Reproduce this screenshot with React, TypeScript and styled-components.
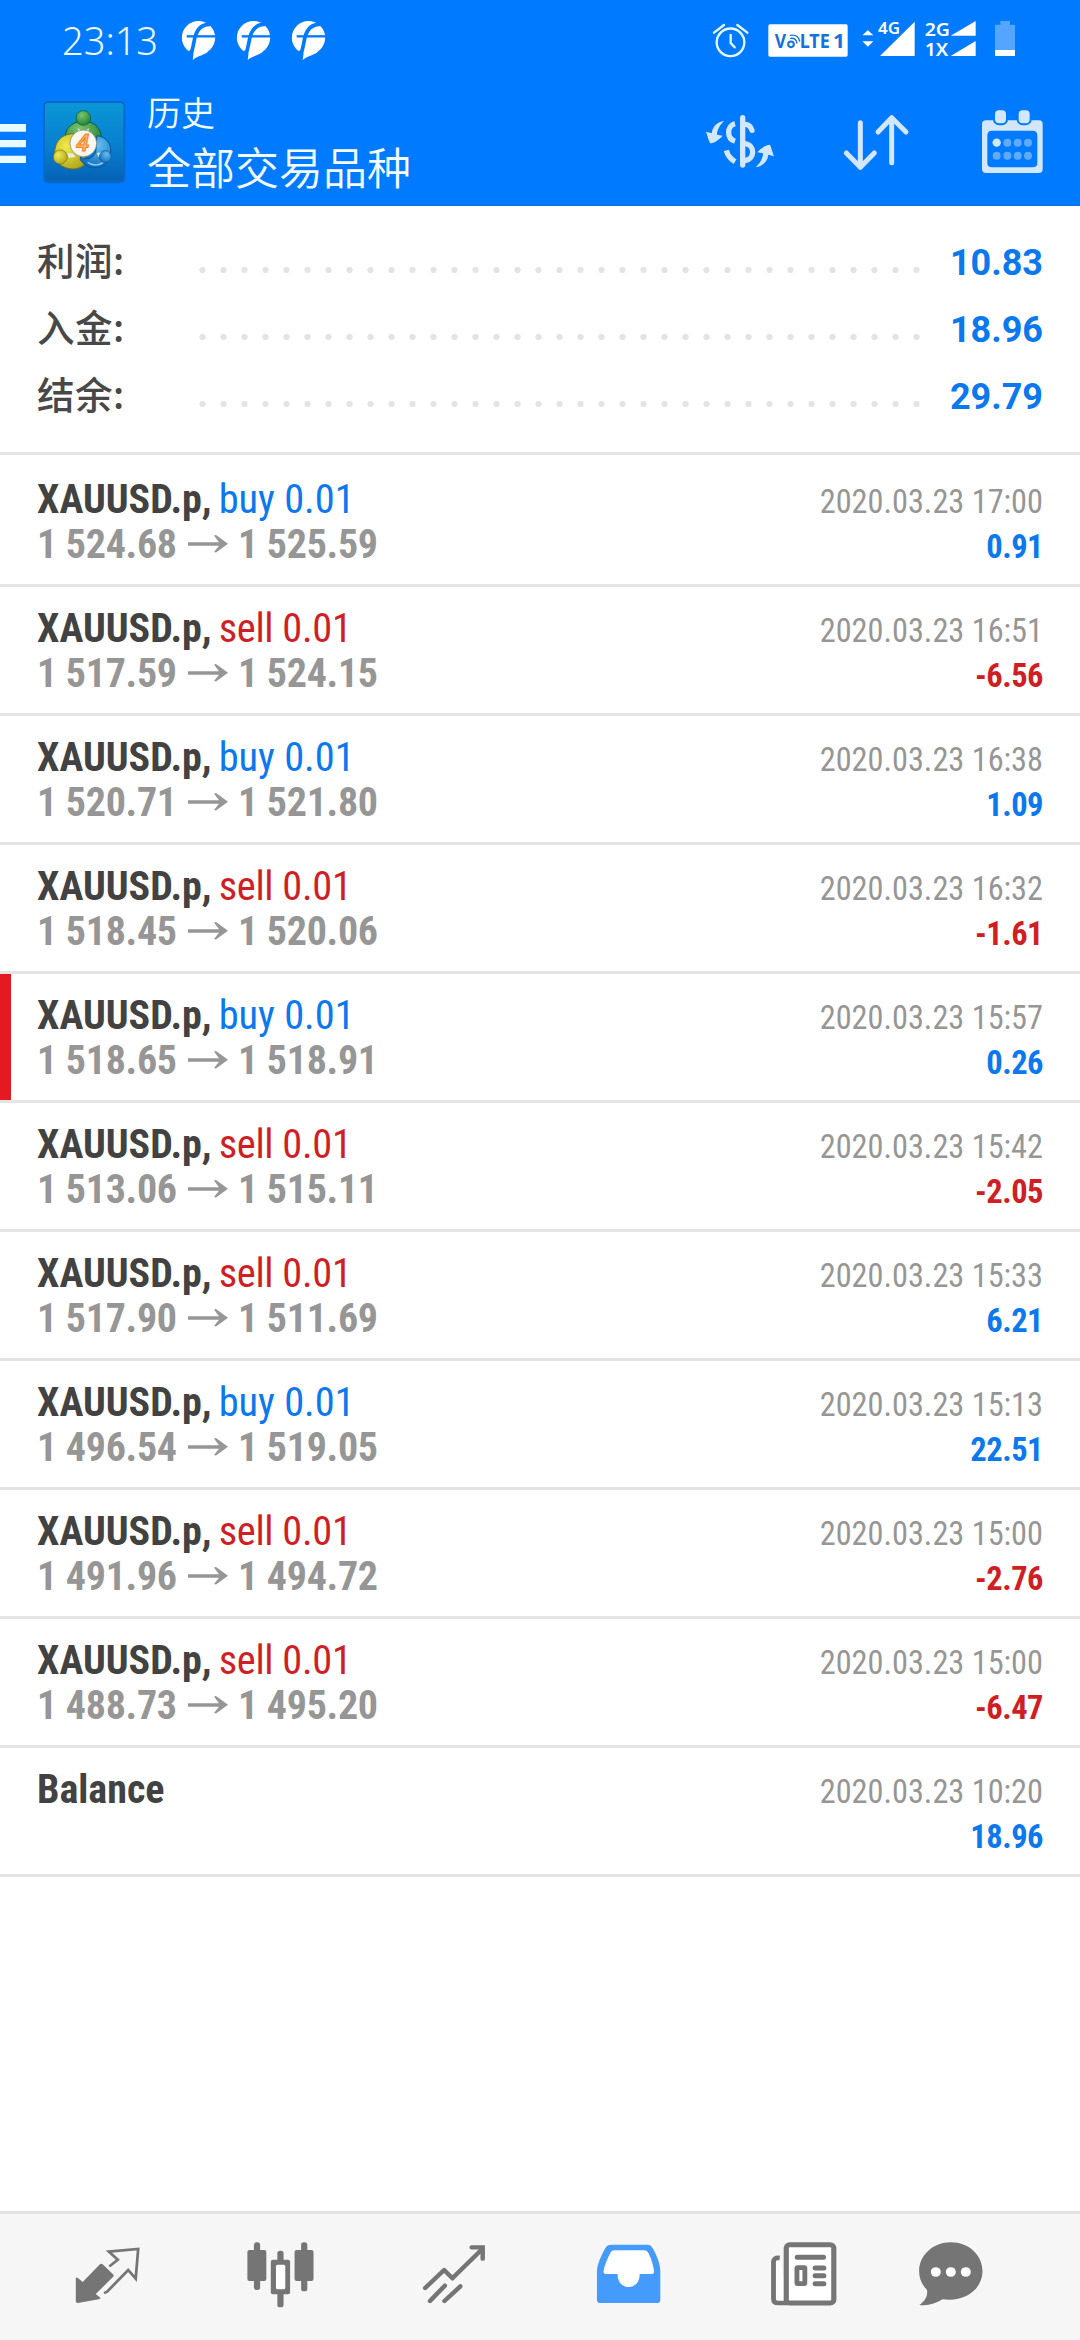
import React from "react";
import styled, { createGlobalStyle } from "styled-components";

const BLUE = "#007aff";
const ICON = "#d2e6fc";
const GREY = "#757575";
const CONDENSED = `"Roboto Condensed", Roboto, "Liberation Sans", sans-serif`;
const CJK = `"Noto Sans CJK SC", sans-serif`;

const GlobalStyle = createGlobalStyle`
  * { box-sizing: border-box; }
  body { margin: 0; background: #fff; }
`;

const Screen = styled.div`
  display: flex;
  flex-direction: column;
  width: 1080px;
  height: 2340px;
  overflow: hidden;
  background: #fff;
  font-family: ${CONDENSED};
`;

const StatusBar = styled.div`
  display: flex;
  align-items: center;
  height: 80px;
  padding: 0 64px 0 62px;
  background: ${BLUE};
`;

const Clock = styled.span`
  width: 119px;
  font: 300 38px/50px "Noto Sans", sans-serif;
  color: #eefaff;
  white-space: nowrap;
`;

const Notifications = styled.div`
  display: flex;
  gap: 20px;
  flex: 1;
`;

const Glyph = styled.svg<{ $w: number; $h: number; $gap?: number }>`
  display: block;
  flex: none;
  overflow: visible;
  width: ${(p) => p.$w}px;
  height: ${(p) => p.$h}px;
  margin-left: ${(p) => p.$gap ?? 0}px;
`;

const SignalText = styled.text`
  font-family: "Noto Sans", sans-serif;
  font-weight: 600;
`;

const Header = styled.header`
  display: flex;
  align-items: center;
  height: 126px;
  padding-right: 32px;
  background: ${BLUE};
  border-bottom: 1px solid #0a70e2;
`;

const Titles = styled.div`
  flex: 1;
  margin: -7px 0 0 21px;
  font-family: ${CJK};
  font-weight: 350;
  color: #f2fcff;
`;

const Caption = styled.div`
  font-size: 34px;
  line-height: 55px;
`;

const Title = styled.div`
  font-size: 44px;
  line-height: 55px;
`;

const Actions = styled.div`
  display: flex;
  gap: 64px;
`;

const Summary = styled.section`
  height: 249px;
  padding: 19px 37px 0 37px;
  border-bottom: 3px solid #e4e4e4;
`;

const SummaryLine = styled.div`
  display: flex;
  align-items: baseline;
  height: 67px;
`;

const Label = styled.span`
  width: 155px;
  font: 500 37.5px/67px ${CJK};
  letter-spacing: 0.5px;
  color: #484848;
`;

const Leader = styled.span`
  align-self: flex-start;
  width: 735px;
  height: 6px;
  margin-top: 42px;
  background: radial-gradient(circle, #e4e4e4 2.8px, transparent 3.5px) 0 0 / 21px 6px;
`;

const Amount = styled.span`
  flex: 1;
  text-align: right;
  font: 700 36px/67px Roboto, sans-serif;
  color: #0b78ee;
`;

const Deals = styled.main`
  flex: 1;
  padding-top: 3px;
`;

const Deal = styled.article<{ $marked?: boolean }>`
  height: 129px;
  padding: 19px 37px 0 37px;
  border-bottom: 3px solid #e4e4e4;
  background: ${(p) => (p.$marked ? "linear-gradient(90deg, #e31b20 10.5px, #fff 10.5px)" : "#fff")};
`;

const DealLine = styled.div`
  display: flex;
  align-items: baseline;
  height: 45px;
  line-height: 45px;
  white-space: pre;

  &::before {
    content: "";
    height: 36px;
  }
`;

const SymbolName = styled.span`
  font-size: 40px;
  font-weight: 700;
  color: #424242;
`;

const Side = styled.span<{ $side: "buy" | "sell" }>`
  margin-left: 7px;
  font-size: 40.4px;
  letter-spacing: ${(p) => (p.$side === "buy" ? "0" : "-0.3px")};
  color: ${(p) => (p.$side === "buy" ? "#0b78ee" : "#cf1f25")};
`;

const Price = styled.span`
  width: 140px;
  font-size: 40px;
  font-weight: 700;
  letter-spacing: -0.3px;
  color: #969696;
`;

const Arrow = styled.svg`
  align-self: flex-start;
  width: 40px;
  height: 18px;
  margin: 13px 10px 0 11px;
`;

const Time = styled.span`
  margin-left: auto;
  font-size: 32.3px;
  color: #969696;
`;

const Profit = styled.span<{ $loss: boolean }>`
  margin-left: auto;
  font-size: 32.5px;
  font-weight: 700;
  letter-spacing: -0.5px;
  color: ${(p) => (p.$loss ? "#cf1f25" : "#0b78ee")};
`;

const NavBar = styled.nav`
  display: flex;
  height: 129px;
  padding-left: 21px;
  background: #f6f6f6;
  border-top: 3px solid #e2e2e2;
`;

const NavItem = styled.div<{ $w: number }>`
  display: flex;
  align-items: center;
  justify-content: center;
  width: ${(p) => p.$w}px;
`;

const NavGlyph = styled.svg.attrs({ preserveAspectRatio: "none" })`
  width: 72px;
  height: 72px;
`;

const FIcon = () => (
  <Glyph $w={35} $h={41} viewBox="543 57 105 123">
    <circle cx="595.5" cy="110" r="50" fill="#fff" />
    <path d="M586 120 L578 177 C590 166 608 164 622 154 L624 118Z" fill="#fff" />
    <path d="M640 70 C606 66 591 86 585 108 C580 134 577 150 570 170" fill="none" stroke={BLUE} strokeWidth="11" />
    <path d="M560 106 H648" stroke={BLUE} strokeWidth="7" />
    <path d="M566 151 L581 140 L576 178 L560 178Z" fill={BLUE} />
    <path d="M592 130 L586 158 L578 177 L600 150Z" fill="#fff" />
  </Glyph>
);

const AppIcon = () => (
  <Glyph $w={83} $h={83} $gap={17} viewBox="0 0 249 249">
    <defs>
      <linearGradient id="tile" x1="0" y1="0" x2="0" y2="1">
        <stop offset="0" stopColor="#0a97d6" />
        <stop offset="0.55" stopColor="#087fd0" />
        <stop offset="1" stopColor="#0561b4" />
      </linearGradient>
      <radialGradient id="green" cx="0.4" cy="0.3" r="0.8">
        <stop offset="0" stopColor="#7cc56a" />
        <stop offset="1" stopColor="#167a35" />
      </radialGradient>
      <radialGradient id="yellow" cx="0.35" cy="0.35" r="0.8">
        <stop offset="0" stopColor="#f1ea4c" />
        <stop offset="1" stopColor="#a99f16" />
      </radialGradient>
      <radialGradient id="sky" cx="0.6" cy="0.3" r="0.8">
        <stop offset="0" stopColor="#63bdf3" />
        <stop offset="1" stopColor="#0965b5" />
      </radialGradient>
    </defs>
    <rect x="3" y="3" width="241" height="241" rx="12" fill="url(#tile)" stroke="#086bc9" strokeWidth="6" />
    <path d="M67 120 C62 84 85 62 121 60 C160 62 180 88 174 124 L156 142 L146 108 L96 102Z" fill="url(#green)" stroke="#0c5c38" strokeWidth="3" />
    <path d="M38 168 C28 130 52 98 92 98 L86 132 L132 176 C124 208 76 212 50 190Z" fill="url(#yellow)" stroke="#6f741c" strokeWidth="3" />
    <path d="M112 168 C130 180 150 172 158 154 L162 104 C192 108 208 132 202 160 C200 200 140 218 112 176Z" fill="url(#sky)" stroke="#07559c" strokeWidth="3" />
    <path d="M134 184 C148 196 172 194 184 180" fill="none" stroke="#8fd0f6" strokeWidth="4" />
    <path d="M104 82 L121 92 L139 82 L134 96 L108 96Z M72 156 L90 158 L98 168 L78 170Z M162 156 L178 154 L166 168Z" fill="#dff0e8" />
    <circle cx="121" cy="51" r="22" fill="url(#green)" stroke="#0c5c38" strokeWidth="2" />
    <circle cx="52" cy="168" r="21" fill="url(#yellow)" stroke="#6f741c" strokeWidth="2" />
    <circle cx="187" cy="167" r="18" fill="url(#sky)" stroke="#07559c" strokeWidth="2" />
    <circle cx="121" cy="127" r="40" fill="#fbf6ee" stroke="#6e7f78" strokeWidth="2" />
    <text x="119" y="151" textAnchor="middle" fontFamily="Noto Sans, sans-serif" fontStyle="italic" fontSize="68" fontWeight="600" fill="#ffb768" stroke="#f08024" strokeWidth="3">4</text>
  </Glyph>
);

const CurvedArrow = () => (
  <path d="M133 362 C111 366 97 380 95 400 L78 395 C82 405 85 419 90 430 C103 429 118 419 128 407 L111 404 C111 389 120 374 133 362Z" />
);

const summary = [
  ["利润:", "10.83"],
  ["入金:", "18.96"],
  ["结余:", "29.79"],
];

type DealData = { side?: "buy" | "sell"; from?: string; to?: string; time: string; profit: string; marked?: boolean };

const deals: DealData[] = [
  { side: "buy", from: "1 524.68", to: "1 525.59", time: "17:00", profit: "0.91" },
  { side: "sell", from: "1 517.59", to: "1 524.15", time: "16:51", profit: "-6.56" },
  { side: "buy", from: "1 520.71", to: "1 521.80", time: "16:38", profit: "1.09" },
  { side: "sell", from: "1 518.45", to: "1 520.06", time: "16:32", profit: "-1.61" },
  { side: "buy", from: "1 518.65", to: "1 518.91", time: "15:57", profit: "0.26", marked: true },
  { side: "sell", from: "1 513.06", to: "1 515.11", time: "15:42", profit: "-2.05" },
  { side: "sell", from: "1 517.90", to: "1 511.69", time: "15:33", profit: "6.21" },
  { side: "buy", from: "1 496.54", to: "1 519.05", time: "15:13", profit: "22.51" },
  { side: "sell", from: "1 491.96", to: "1 494.72", time: "15:00", profit: "-2.76" },
  { side: "sell", from: "1 488.73", to: "1 495.20", time: "15:00", profit: "-6.47" },
  { time: "10:20", profit: "18.96" },
];

const DealRow = ({ deal }: { deal: DealData }) => (
  <Deal $marked={deal.marked}>
    <DealLine>
      <SymbolName>{deal.side ? "XAUUSD.p," : "Balance"}</SymbolName>
      {deal.side && <Side $side={deal.side}>{deal.side} 0.01</Side>}
      <Time>2020.03.23 {deal.time}</Time>
    </DealLine>
    <DealLine>
      {deal.from && (
        <>
          <Price>{deal.from}</Price>
          <Arrow viewBox="0 0 40 18">
            <path d="M0 7.2 H31 L26 0.5 L28 0 L40 8.8 L28 17.5 L26 17 L31 10.8 H0Z" fill="#969696" />
          </Arrow>
          <Price>{deal.to}</Price>
        </>
      )}
      <Profit $loss={deal.profit.startsWith("-")}>{deal.profit}</Profit>
    </DealLine>
  </Deal>
);

export default function App() {
  return (
    <Screen>
      <GlobalStyle />
      <StatusBar>
        <Clock>23:13</Clock>
        <Notifications>
          <FIcon />
          <FIcon />
          <FIcon />
        </Notifications>
        <Glyph $w={38} $h={38} viewBox="96 66 114 114" fill="none" stroke="#e6fbff" strokeWidth="7" strokeLinecap="round">
          <circle cx="151.500" cy="130" r="41.500" />
          <path d="M152 108 V132 L164 145 M102 101 L132 78 M202 101 L172 78" />
        </Glyph>
        <Glyph $w={80} $h={38} $gap={18} viewBox="264 66 240 114">
          <rect x="265" y="76" width="238" height="97" rx="5" fill="#fff" />
          <g fill="#1273dc" fontFamily="Noto Sans, sans-serif" fontWeight="700">
            <text x="284" y="147" fontSize="58" textLength="34" lengthAdjust="spacingAndGlyphs">V</text>
            <text x="359" y="147" fontSize="58" textLength="90" lengthAdjust="spacingAndGlyphs">LTE</text>
            <text x="459" y="147" fontSize="58" textLength="36" lengthAdjust="spacingAndGlyphs">1</text>
          </g>
          <g fill="none" stroke="#1273dc" strokeLinecap="round">
            <circle cx="333" cy="136" r="8.500" strokeWidth="6" />
            <path d="M332 118 C342 117 349 123 351 132 M331 109 C346 107 356 115 359 126" strokeWidth="4" />
          </g>
        </Glyph>
        <Glyph $w={55} $h={38} $gap={12} viewBox="540 66 165 114" fill="#fff">
          <path d="M547 109 L563.500 94 L580 109Z M547 127 L580 127 L563.500 143Z" />
          <path d="M600 171 H704 V68Z" />
          <SignalText x="594" y="105" fontSize="49" stroke={BLUE} strokeWidth="6" paintOrder="stroke" textLength="66" lengthAdjust="spacingAndGlyphs">4G</SignalText>
        </Glyph>
        <Glyph $w={53} $h={38} $gap={9} viewBox="732 66 159 114" fill="#fff">
          <SignalText x="734" y="110" fontSize="51" textLength="76" lengthAdjust="spacingAndGlyphs">2G</SignalText>
          <SignalText x="734" y="171" fontSize="51" textLength="71" lengthAdjust="spacingAndGlyphs">1X</SignalText>
          <path d="M812 110 H887 V66Z M812 171 H887 V126Z" />
        </Glyph>
        <Glyph $w={22} $h={38} $gap={17} viewBox="942 66 66 114" fill="#fff">
          <path d="M961 66 H990 V77 H1005 V153 H945 V77 H961Z" opacity="0.33" />
          <path d="M945 153 H1005 V171 H945Z" />
        </Glyph>
      </StatusBar>

      <Header>
        <Glyph $w={26} $h={43} viewBox="0 366 78 129" fill="#e8faff">
          <path d="M0 375 H78 V398 H0Z M0 423 H78 V445 H0Z M0 470 H78 V492 H0Z" />
        </Glyph>
        <AppIcon />
        <Titles>
          <Caption>历史</Caption>
          <Title>全部交易品种</Title>
        </Titles>
        <Actions>
          <Glyph $w={72} $h={72} viewBox="72 321 216 216" fill={ICON}>
            <CurvedArrow />
            <g transform="rotate(180 180 432)">
              <CurvedArrow />
            </g>
            <rect x="180" y="345" width="16" height="158" rx="8" />
            <g fill="none" stroke={ICON} strokeWidth="16">
              <path d="M196 373 C207 374 213 380 216 391" strokeLinecap="round" />
              <path d="M194 431 C226 434 226 478 194 482" />
              <path d="M165 371 C140 378 139 415 165 424" />
              <path d="M139 451 C143 468 152 477 165 485" />
            </g>
          </Glyph>
          <Glyph $w={72} $h={72} viewBox="480 321 216 216" fill="none" stroke={ICON} strokeWidth="15" strokeLinecap="round" strokeLinejoin="round">
            <path d="M541 368 V502 M499 459 L541 502 L583 459 M635 488 V353 M594 396 L635 353 L678 396" />
          </Glyph>
          <Glyph $w={72} $h={72} viewBox="888 321 216 216" fill={ICON}>
            <path fillRule="evenodd" d="M918 361 H1077 Q1088 361 1088 372 V507 Q1088 519 1077 519 H918 Q906 519 906 507 V372 Q906 361 918 361Z M936 392 Q922 392 922 406 V489 Q922 502 936 502 H1058 Q1072 502 1072 489 V406 Q1072 392 1058 392Z" />
            <g stroke={BLUE} strokeWidth="6">
              <rect x="942" y="328" width="39" height="45" rx="15" />
              <rect x="1013" y="328" width="39" height="45" rx="15" />
            </g>
            <circle cx="950" cy="428" r="12.500" />
            <g opacity="0.45">
              {[982, 1013, 1044].map((x) => (
                <circle key={x} cx={x} cy="428" r="12" />
              ))}
              {[950, 982, 1013, 1044].map((x) => (
                <circle key={x} cx={x} cy="467" r="12" />
              ))}
            </g>
          </Glyph>
        </Actions>
      </Header>

      <Summary>
        {summary.map(([label, value]) => (
          <SummaryLine key={label}>
            <Label>{label}</Label>
            <Leader />
            <Amount>{value}</Amount>
          </SummaryLine>
        ))}
      </Summary>

      <Deals>
        {deals.map((deal, i) => (
          <DealRow key={i} deal={deal} />
        ))}
      </Deals>

      <NavBar>
        <NavItem $w={174}>
          <NavGlyph viewBox="209 123 209 216">
            <path d="M290 193 Q294 189 298 193 L328 223 Q332 227 328 231 L278 282 L292 294 Q291 297 287 298 L226 309 Q220 309 220 304 V234 Q223 231 226 234 L240 246Z" fill={GREY} />
            <path d="M320 197 L342 179 L316 155 L401 147 L394 236 L372 210 L311 275 L305 278" fill="none" stroke={GREY} strokeWidth="8" strokeLinecap="round" />
          </NavGlyph>
        </NavItem>
        <NavItem $w={174}>
          <NavGlyph viewBox="713 123 209 216" fill={GREY}>
            <rect x="736" y="127" width="18" height="143" rx="8" />
            <rect x="717" y="150" width="55" height="93" rx="6" />
            <rect x="873" y="127" width="18" height="147" rx="8" />
            <rect x="854" y="150" width="55" height="93" rx="6" />
            <rect x="804" y="152" width="18" height="170" rx="8" />
            <rect x="785" y="179" width="56" height="104" rx="6" />
            <rect x="800" y="194" width="27" height="74" rx="5" fill="#fff" />
          </NavGlyph>
        </NavItem>
        <NavItem $w={174}>
          <NavGlyph viewBox="1217 123 209 216" fill="none" stroke={GREY} strokeWidth="13" strokeLinecap="round" strokeLinejoin="round">
            <path d="M1232 264 L1287 210 L1311 235 L1397 148 M1246 303 L1289 257 M1288 303 L1334 259" />
            <path d="M1367 142 H1399 V176" strokeLinejoin="miter" />
          </NavGlyph>
        </NavItem>
        <NavItem $w={174}>
          <NavGlyph viewBox="152.500 123 209 216">
            <path d="M203 134 H309 Q317 134 321 142 C333 162 345 190 345 214 V299 Q345 309 335 309 H172 Q161 309 161 299 V214 C162 190 176 162 187 142 Q191 134 203 134Z" fill="#449bfb" />
            <path d="M212 151 H297 Q306 151 310 158 C317 172 324 190 327 215 Q327 222 320 222 H285 C287 273 220 275 221 222 H187 Q179 222 180 214 C183 196 192 174 201 157 Q204 151 212 151Z" fill="#fff" />
          </NavGlyph>
        </NavItem>
        <NavItem $w={174}>
          <NavGlyph viewBox="656 123 209 216">
            <path d="M690 174 Q672 172 672 186 V297 Q672 309 685 309 H715" fill="#fff" stroke={GREY} strokeWidth="14" />
            <rect x="709" y="134" width="138" height="175" rx="10" fill="#fff" stroke={GREY} strokeWidth="15" />
            <path d="M741 172 H817 M793 204 H818 M793 227 H818 M793 251 H818" stroke={GREY} strokeWidth="15" strokeLinecap="round" />
            <rect x="740" y="203" width="23" height="48" rx="2" fill="#fff" stroke={GREY} strokeWidth="14" />
          </NavGlyph>
        </NavItem>
        <NavItem $w={120}>
          <NavGlyph viewBox="1089 123 209 216">
            <path d="M1193 127 C1245 127 1285 165 1285 214 C1285 264 1238 307 1169 298 C1148 311 1128 318 1102 315 C1120 302 1126 286 1124 270 C1108 254 1101 235 1101 214 C1101 165 1142 127 1193 127Z" fill={GREY} />
            {[1149.5, 1193, 1236.5].map((x) => (
              <circle key={x} cx={x} cy="216" r="14.500" fill="#fff" />
            ))}
          </NavGlyph>
        </NavItem>
      </NavBar>
    </Screen>
  );
}
